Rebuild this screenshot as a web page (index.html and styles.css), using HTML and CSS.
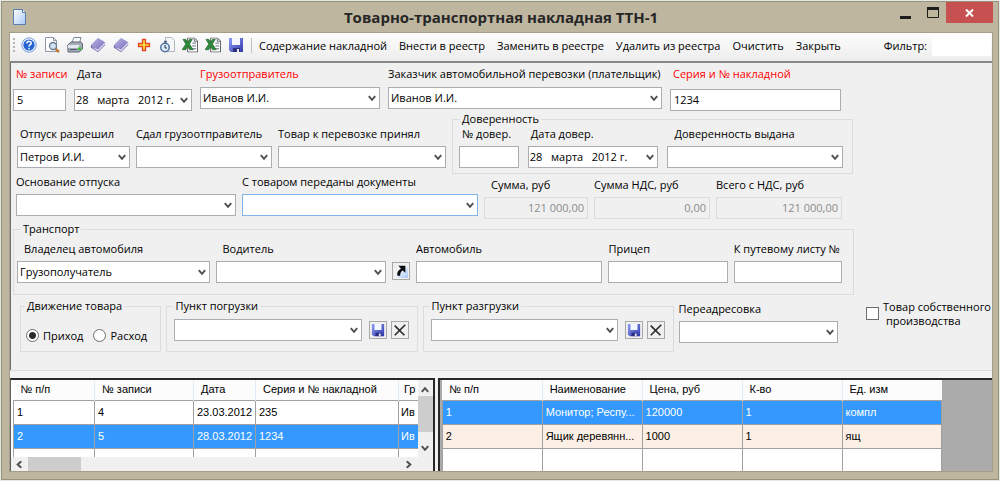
FILE: index.html
```html
<!DOCTYPE html>
<html lang="ru">
<head>
<meta charset="utf-8">
<title>Товарно-транспортная накладная ТТН-1</title>
<link rel="stylesheet" href="styles.css">
</head>
<body>
<svg class="defs" aria-hidden="true">
  <defs>
    <linearGradient id="blue" x1="0" y1="0" x2="1" y2="1"><stop offset="0" stop-color="#8fa0f4"/><stop offset="1" stop-color="#3238ac"/></linearGradient>
    <linearGradient id="page" x1="0" y1="0" x2="1" y2="1"><stop offset="0" stop-color="#ffffff"/><stop offset="1" stop-color="#a9c9f3"/></linearGradient>
    <linearGradient id="book" x1="0" y1="0" x2="1" y2="1"><stop offset="0" stop-color="#b9b4e4"/><stop offset="1" stop-color="#7670bc"/></linearGradient>
    <symbol id="chevron" viewBox="0 0 8 7"><path d="M0.8 1.2 4 4.8 7.2 1.2" fill="none" stroke="#505050" stroke-width="2"/></symbol>
    <symbol id="floppy" viewBox="0 0 16 16"><path d="M1 1h14v14H3L1 13z" fill="url(#blue)"/><path d="M4 1h8v7H4z" fill="#f4f7ff"/><path d="M5 11h7v4H5z" fill="#2c3180"/><path d="M9 12h2v3H9z" fill="#e6eaff"/></symbol>
    <symbol id="cross" viewBox="0 0 16 16"><path d="M2 3 13 14M14 2 2 14" fill="none" stroke="#303034" stroke-width="2"/></symbol>
    <symbol id="bookicon" viewBox="0 0 18 16"><path d="M1 8v3l8 5 8-8V5l-8 8z" fill="#6964ac"/><path d="M1 10 9 15l8-8V5L9 13z" fill="#e8e8f6"/><path d="M1 8 9 0l8 5-8 8z" fill="url(#book)"/></symbol>
    <symbol id="excel" viewBox="0 0 17 16"><path d="M6 .5h7l3.500 3V15.500H6z" fill="#fff" stroke="#55585c"/><path d="M13 1v3h3M11 6h4M11 9h4M11 12h4" fill="none" stroke="#567"/><path d="M1 2h3l2 3 2-3h3L8 7l4 6H8L6 9.500 4 13H0l4-6z" fill="#2f8a3a" stroke="#1a5a25" stroke-width=".6"/></symbol>
  </defs>
</svg>
<main class="window">
  <header class="titlebar">
    <svg class="app-icon" viewBox="0 0 13 16"><path d="M.5 .5h9l3 3V15.500H.5z" fill="url(#page)" stroke="#5a7fae"/><path d="M9.500 .5v3h3" fill="#fff" stroke="#5a7fae"/></svg>
    <h1>Товарно-транспортная накладная ТТН-1</h1>
    <div class="window-buttons">
      <button class="win-btn" aria-label="Свернуть"><svg viewBox="0 0 12 12" width="12" height="12"><path d="M0 9h11v3H0z" fill="#1d1d1d"/></svg></button>
      <button class="win-btn" aria-label="Развернуть"><svg viewBox="0 0 12 11" width="12" height="11"><path d="M.5 .5h11v10H.5z" fill="none" stroke="#1d1d1d"/><path d="M0 0h12v3H0z" fill="#1d1d1d"/></svg></button>
      <button class="win-btn close" aria-label="Закрыть окно"><svg viewBox="0 0 9 8" width="9" height="8"><path d="M1 .5 8 7.500M8 .5 1 7.500" stroke="#fff" stroke-width="2"/></svg></button>
    </div>
  </header>
  <div class="client">
    <nav class="toolbar">
      <span class="grip"></span>
      <div class="icons">
        <button aria-label="Справка"><svg viewBox="0 0 16 16"><circle cx="8" cy="8" r="7.200" fill="#e9f1ff" stroke="#7f9fd8"/><circle cx="8" cy="8" r="5.600" fill="#2463d0"/><path d="M5.800 6.500c0-3 4.600-2.600 4.400-.2C10 7.800 8 7.600 8 9.500M8 10.800v1.500" fill="none" stroke="#fff" stroke-width="1.500"/></svg></button>
        <button aria-label="Просмотр"><svg viewBox="0 0 16 16"><path d="M1.500 .5h8l3 3v11h-11z" fill="#fff" stroke="#8b98aa"/><path d="M9.500 .5v3h3" fill="none" stroke="#8b98aa"/><path d="m11.500 12 3.500 3" stroke="#c07836" stroke-width="2.500"/><circle cx="9" cy="9" r="3.500" fill="#cfe3f5" stroke="#6a7a8c" stroke-width="1.300"/></svg></button>
        <button aria-label="Печать"><svg viewBox="0 0 16 16"><path d="M5 5 7 .5h7L12.500 6z" fill="#f8fbff" stroke="#7a8795"/><path d="M.8 8 4 5h10l1.500 2v5L12 15H1z" fill="#a4adb9" stroke="#5e6874"/><path d="M1 8h11v3H1z" fill="#e3e8ee"/><path d="M3 12.500h7" stroke="#505a66"/><path d="M11 10.500h3v2.500h-3z" fill="#34c02c"/></svg></button>
        <button aria-label="Справочник"><svg viewBox="0 0 18 16"><use href="#bookicon"/></svg></button>
        <button aria-label="Каталог"><svg viewBox="0 0 18 16"><use href="#bookicon"/></svg></button>
        <button aria-label="Добавить"><svg viewBox="0 0 16 16"><path d="M6.500 2.500h3v4h4v3h-4v4h-3v-4h-4v-3h4z" fill="#ffe03a" stroke="#e0462a" stroke-width="1.300"/></svg></button>
        <button aria-label="История"><svg viewBox="0 0 16 16"><path d="M6.500 .5h6l3 3v11h-9z" fill="#f5f6f8" stroke="#b0b6be"/><path d="M5 4.500h3M6.500 4v2" stroke="#53647c" stroke-width="1.500"/><circle cx="6" cy="10.500" r="4.200" fill="#dfeeff" stroke="#53719c" stroke-width="1.500"/><path d="M6 8v3h2" fill="none" stroke="#234"/></svg></button>
        <button aria-label="Экспорт в Excel"><svg viewBox="0 0 17 16"><use href="#excel"/></svg></button>
        <button aria-label="Реестр в Excel"><svg viewBox="0 0 17 16"><use href="#excel"/></svg></button>
        <button aria-label="Сохранить"><svg viewBox="0 0 16 16"><use href="#floppy"/></svg></button>
      </div>
      <span class="divider"></span>
      <div class="commands">
        <button>Содержание накладной</button>
        <button>Внести в реестр</button>
        <button>Заменить в реестре</button>
        <button>Удалить из реестра</button>
        <button>Очистить</button>
        <button>Закрыть</button>
      </div>
      <label class="filter">Фильтр: <input type="text"></label>
    </nav>

    <form class="form">
      <div class="row row-main">
        <div class="field low required"><label for="rec">№ записи</label><input id="rec" type="text" value="5"></div>
        <div class="field low"><label for="date">Дата</label><span class="combo date"><select id="date"><option>28 &nbsp; марта &nbsp; 2012 г.</option></select><svg><use href="#chevron"/></svg></span></div>
        <div class="field required"><label for="sender">Грузоотправитель</label><span class="combo"><select id="sender"><option>Иванов И.И.</option></select><svg><use href="#chevron"/></svg></span></div>
        <div class="field"><label for="payer">Заказчик автомобильной перевозки (плательщик)</label><span class="combo"><select id="payer"><option>Иванов И.И.</option></select><svg><use href="#chevron"/></svg></span></div>
        <div class="field low required"><label for="series">Серия и № накладной</label><input id="series" type="text" value="1234"></div>
      </div>

      <div class="row row-people">
        <div class="field"><label for="allow">Отпуск разрешил</label><span class="combo"><select id="allow"><option>Петров И.И.</option></select><svg><use href="#chevron"/></svg></span></div>
        <div class="field flush"><label for="gave">Сдал грузоотправитель</label><span class="combo"><select id="gave"><option></option></select><svg><use href="#chevron"/></svg></span></div>
        <div class="field flush"><label for="took">Товар к перевозке принял</label><span class="combo"><select id="took"><option></option></select><svg><use href="#chevron"/></svg></span></div>
        <fieldset class="warrant">
          <legend>Доверенность</legend>
          <div class="row">
            <div class="field"><label for="wnum">№ довер.</label><input id="wnum" type="text"></div>
            <div class="field"><label for="wdate">Дата довер.</label><span class="combo date"><select id="wdate"><option>28 &nbsp; марта &nbsp; 2012 г.</option></select><svg><use href="#chevron"/></svg></span></div>
            <div class="field inset"><label for="wby">Доверенность выдана</label><span class="combo"><select id="wby"><option></option></select><svg><use href="#chevron"/></svg></span></div>
          </div>
        </fieldset>
      </div>

      <div class="row row-sums">
        <div class="field flush"><label for="basis">Основание отпуска</label><span class="combo"><select id="basis"><option></option></select><svg><use href="#chevron"/></svg></span></div>
        <div class="field flush"><label for="docs">С товаром переданы документы</label><span class="combo active"><select id="docs"><option></option></select><svg><use href="#chevron"/></svg></span></div>
        <div class="field sum inset"><label for="sum">Сумма, руб</label><input id="sum" type="text" value="121 000,00" disabled></div>
        <div class="field sum flush"><label for="vat">Сумма НДС, руб</label><input id="vat" type="text" value="0,00" disabled></div>
        <div class="field sum flush"><label for="total">Всего с НДС, руб</label><input id="total" type="text" value="121 000,00" disabled></div>
      </div>

      <fieldset class="transport">
        <legend>Транспорт</legend>
        <div class="row">
          <div class="field inset"><label for="owner">Владелец автомобиля</label><span class="combo"><select id="owner"><option>Грузополучатель</option></select><svg><use href="#chevron"/></svg></span></div>
          <div class="field inset"><label for="driver">Водитель</label><span class="combo"><select id="driver"><option></option></select><svg><use href="#chevron"/></svg></span></div>
          <button type="button" class="mini" aria-label="Открыть водителя"><svg viewBox="0 0 16 16"><path d="M4 4h12v12H4z" fill="url(#page)"/><path d="M5 2h8v8l-3-2.500c-2 1-3 3-3 6H4C3 10 5 7 8 5.500z" fill="#0c0c10"/></svg></button>
          <div class="field flush"><label for="car">Автомобиль</label><input id="car" type="text"></div>
          <div class="field flush"><label for="trailer">Прицеп</label><input id="trailer" type="text"></div>
          <div class="field flush"><label for="sheet">К путевому листу №</label><input id="sheet" type="text"></div>
        </div>
      </fieldset>

      <div class="row row-points">
        <fieldset class="movement">
          <legend>Движение товара</legend>
          <div class="radios">
            <label><input type="radio" name="move" checked>Приход</label>
            <label><input type="radio" name="move">Расход</label>
          </div>
        </fieldset>
        <fieldset class="point">
          <legend>Пункт погрузки</legend>
          <div class="point-line">
            <span class="combo"><select aria-label="Пункт погрузки"><option></option></select><svg><use href="#chevron"/></svg></span>
            <button type="button" class="mini" aria-label="Сохранить пункт погрузки"><svg viewBox="0 0 16 16"><use href="#floppy"/></svg></button>
            <button type="button" class="mini" aria-label="Удалить пункт погрузки"><svg viewBox="0 0 16 16"><use href="#cross"/></svg></button>
          </div>
        </fieldset>
        <fieldset class="point">
          <legend>Пункт разгрузки</legend>
          <div class="point-line">
            <span class="combo"><select aria-label="Пункт разгрузки"><option></option></select><svg><use href="#chevron"/></svg></span>
            <button type="button" class="mini" aria-label="Сохранить пункт разгрузки"><svg viewBox="0 0 16 16"><use href="#floppy"/></svg></button>
            <button type="button" class="mini" aria-label="Удалить пункт разгрузки"><svg viewBox="0 0 16 16"><use href="#cross"/></svg></button>
          </div>
        </fieldset>
        <div class="field flush redirect"><label for="redir">Переадресовка</label><span class="combo"><select id="redir"><option></option></select><svg><use href="#chevron"/></svg></span></div>
        <label class="own"><input type="checkbox"><span>Товар собственного<br>&nbsp;производства</span></label>
      </div>
    </form>

    <div class="splitter"></div>

    <section class="panes">
      <div class="pane left">
        <div class="grid-view">
          <table>
            <colgroup><col class="c-num"><col class="c-rec"><col class="c-date"><col class="c-series"><col class="c-sender"></colgroup>
            <thead><tr><th>№ п/п</th><th>№ записи</th><th>Дата</th><th>Серия и № накладной</th><th>Гр</th></tr></thead>
            <tbody>
              <tr><td>1</td><td>4</td><td>23.03.2012</td><td>235</td><td>Ив</td></tr>
              <tr class="selected"><td>2</td><td>5</td><td>28.03.2012</td><td>1234</td><td>Ив</td></tr>
              <tr><td></td><td></td><td></td><td></td><td></td></tr>
            </tbody>
          </table>
        </div>
        <div class="vbar"><svg class="up"><use href="#chevron"/></svg><span class="thumb"></span><svg><use href="#chevron"/></svg></div>
        <div class="hbar"><svg class="back"><use href="#chevron"/></svg><span class="thumb"></span><svg class="fwd"><use href="#chevron"/></svg></div>
      </div>
      <div class="pane right">
        <div class="grid-view">
          <table>
            <thead><tr><th>№ п/п</th><th>Наименование</th><th>Цена, руб</th><th>К-во</th><th>Ед. изм</th></tr></thead>
            <tbody>
              <tr class="selected"><td>1</td><td>Монитор; Респу...</td><td>120000</td><td>1</td><td>компл</td></tr>
              <tr class="alt"><td>2</td><td>Ящик деревянн...</td><td>1000</td><td>1</td><td>ящ</td></tr>
              <tr><td></td><td></td><td></td><td></td><td></td></tr>
            </tbody>
          </table>
        </div>
      </div>
    </section>
  </div>
</main>
</body>
</html>
```

FILE: styles.css
```css
* { box-sizing: border-box; }

body {
  margin: 0;
  padding: 1px;
  background: #e6e8e6;
  color: #000;
  font: 11px/15px "Open Sans", "Noto Sans", sans-serif;
}

button, input, select { font: inherit; color: inherit; margin: 0; }
button { padding: 0; border: 0; background: none; }
svg { display: block; }
.defs { position: absolute; width: 0; height: 0; }

.window {
  display: flex;
  flex-direction: column;
  height: calc(100vh - 2px);
  min-height: 470px;
  padding: 0 5px 7px 7px;
  border: 1px solid #9a927d;
  background: #bfb69f;
}

/* Title bar */
.titlebar {
  display: grid;
  grid-template-columns: 1fr auto 1fr;
  align-items: center;
  height: 30px;
  flex: none;
}
.app-icon { width: 13px; height: 16px; margin-left: 4px; }
.titlebar h1 { margin: 0; font-size: 15px; line-height: 30px; font-weight: 700; color: #262626; }
.window-buttons { display: flex; justify-content: flex-end; align-self: start; }
.win-btn { display: flex; align-items: center; justify-content: center; width: 27px; height: 21px; }
.win-btn.close { width: 47px; background: #c75050; }

.client {
  display: flex;
  flex-direction: column;
  flex: 1;
  min-height: 0;
  border: 1px solid #a59d87;
  background: #f0f0f0;
}

/* Toolbar */
.toolbar {
  display: flex;
  align-items: center;
  height: 30px;
  flex: none;
  padding: 0 1px 4px 3px;
  border-bottom: 2px solid #85878a;
  background: linear-gradient(#fdfdfd, #ededed);
}
.grip { width: 2px; height: 14px; margin-right: 6px; background: repeating-linear-gradient(#b4b4b4 0 2px, transparent 2px 4px); }
.icons { display: flex; gap: 7px; }
.icons svg { width: 16px; height: 16px; }
.divider { width: 1px; height: 15px; margin: 0 7px; background: #c2c2c2; }
.commands { display: flex; gap: 12px; white-space: nowrap; }
.filter { display: flex; align-items: center; gap: 5px; margin-left: auto; }
.toolbar .filter input { width: 59px; border: 0; }

/* Form */
.form {
  flex: none;
  padding: 3px 1px 18px 2px;
  border-left: 1px solid #707070;
}
.row { display: grid; }
.field { display: flex; flex-direction: column; gap: 5px; min-width: 0; }
.field > label { padding-left: 3px; white-space: nowrap; }
.field.flush > label { padding-left: 0; }
.field.inset > label { padding-left: 7px; }
.required > label { color: #ff0000; }

input[type="text"], .combo select {
  width: 100%;
  min-width: 0;
  height: 22px;
  padding: 0 3px 2px;
  border: 1px solid #abadb3;
  border-radius: 0;
  background: #fff;
  outline: 0;
}
input[type="text"]:disabled { border-color: #dcdcdc; background: #f0f0f0; color: #8c8c8c; text-align: right; }
.combo { position: relative; display: block; min-width: 0; }
.combo select { appearance: none; display: block; padding-left: 2px; padding-right: 14px; }
.combo.date select { padding-right: 0; padding-left: 1px; }
.combo.active select { border-color: #7eb4ea; }
.combo svg { position: absolute; right: 4px; top: 8px; width: 8px; height: 7px; pointer-events: none; }

fieldset { min-width: 0; margin: 0; padding: 0; border: 1px solid #dcdcdc; }
legend { margin-left: 7px; padding: 0 2px; line-height: 14px; }

.row-main { grid-template-columns: 53fr 118fr 180fr 274fr 171fr 142fr; column-gap: 8px; height: 46px; }
.row-main .field > label { padding-left: 0; }
.row-main .field { gap: 6px; }
.row-main .field.low { gap: 8px; }
.row-main .low > label { padding-left: 3px; }

.row-people {
  grid-template-columns: 113fr 136fr 168fr 401fr 132fr;
  column-gap: 6px;
  align-items: end;
  padding-left: 4px;
}
.row-people > .field { margin-bottom: 6px; }
.warrant .row { grid-template-columns: 60fr 131fr 176fr; column-gap: 9px; padding: 0 9px 5px 6px; }

.row-sums { grid-template-columns: 220fr 236fr 104fr 116fr 126fr 143fr; column-gap: 6px; padding-left: 3px; }
.sum { padding-top: 3px; }

.transport { width: 86%; margin-top: 3px; }
.transport .row {
  grid-template-columns: 192fr 170fr 18px 186fr 119fr 108fr;
  column-gap: 6px;
  align-items: end;
  padding: 5px 11px 11px 3px;
}

.mini { display: flex; align-items: center; justify-content: center; width: 18px; height: 18px; border: 1px solid #a8a8a8; background: #f0f0f0; }
.mini svg { width: 14px; height: 14px; }
.transport .mini { margin-bottom: 3px; }

.row-points { grid-template-columns: 142fr 252fr 252fr 160fr 144fr; column-gap: 5px; padding-left: 7px; padding-top: 4px; }
.movement legend { margin-left: 4px; }
.radios { display: flex; gap: 10px; padding: 15px 0 0 5px; }
.radios label { display: flex; align-items: center; gap: 4px; }
.radios input { width: 13px; height: 13px; appearance: none; border: 1px solid #6e6e6e; border-radius: 50%; background: #fff; }
.radios input:checked { background: radial-gradient(circle, #2a2a2a 0 3px, #fff 4px); }
.point-line { display: flex; align-items: center; gap: 4px; padding: 6px 8px 10px 7px; }
.point legend { margin-left: 6px; }
.point-line .combo { flex: 1; margin-right: 3px; }
.redirect { padding-top: 2px; }
.own { display: flex; align-items: flex-start; gap: 4px; margin: 1px 0 0 23px; line-height: 14px; white-space: nowrap; }
.own input { flex: none; appearance: none; width: 13px; height: 13px; margin-top: 7px; border: 1px solid #6e6e6e; background: #fff; }

.splitter { height: 8px; flex: none; border-top: 1px solid #dcdcdc; background: #f3f3f3; }

/* Data grids */
.panes {
  display: grid;
  grid-template-columns: 426fr 556fr;
  column-gap: 3px;
  flex: 1;
  min-height: 0;
  font-family: "Liberation Sans", Arial, sans-serif;
}
.pane { min-width: 0; min-height: 0; border-top: 2px solid #28282a; }
.left {
  display: grid;
  grid-template: minmax(0, 1fr) 14px / minmax(0, 1fr) 15px;
  border-left: 1px solid #606060;
  border-right: 2px solid #28282a;
}
.right { border-left: 2px solid #28282a; background: #ababab; }
.grid-view { overflow: hidden; padding-left: 2px; background: #fff; }
.right .grid-view { height: 100%; background: #ababab; }

table { table-layout: fixed; border-collapse: collapse; background: #fff; }
.left table { width: 100%; }
.right table { width: 91%; }
.c-num { width: 81px; }
.c-rec { width: 99px; }
.c-date { width: 62px; }
.c-series { width: 143px; }
th, td { overflow: hidden; padding: 0 0 0 3px; text-align: left; white-space: nowrap; }
th { height: 20px; padding-left: 7px; border-right: 1px solid #e2ecf6; font-weight: 400; background: #fcfcfc; }
th:last-child, .left td:last-child { border-right: 0; }
.left th:last-child { padding-left: 5px; }
td { height: 24px; border: 1px solid #a0a0a0; }
.left td:last-child { padding-left: 2px; }
.selected td { background: #3399ff; color: #fff; }
.alt td { background: #fcf0e6; }

.vbar { display: flex; flex-direction: column; align-items: center; padding: 6px 0 5px; }
.vbar svg, .hbar svg { width: 8px; height: 7px; flex: none; }
.vbar .thumb { width: 15px; height: 36px; margin: 3px 0 auto; background: #cdcdcd; }
.up { transform: rotate(180deg); }
.hbar { display: flex; align-items: center; padding: 0 5px 0 4px; }
.hbar .thumb { width: 53px; height: 14px; margin: 0 auto 0 5px; background: #cdcdcd; }
.back { transform: rotate(90deg); }
.fwd { transform: rotate(-90deg); }
```
